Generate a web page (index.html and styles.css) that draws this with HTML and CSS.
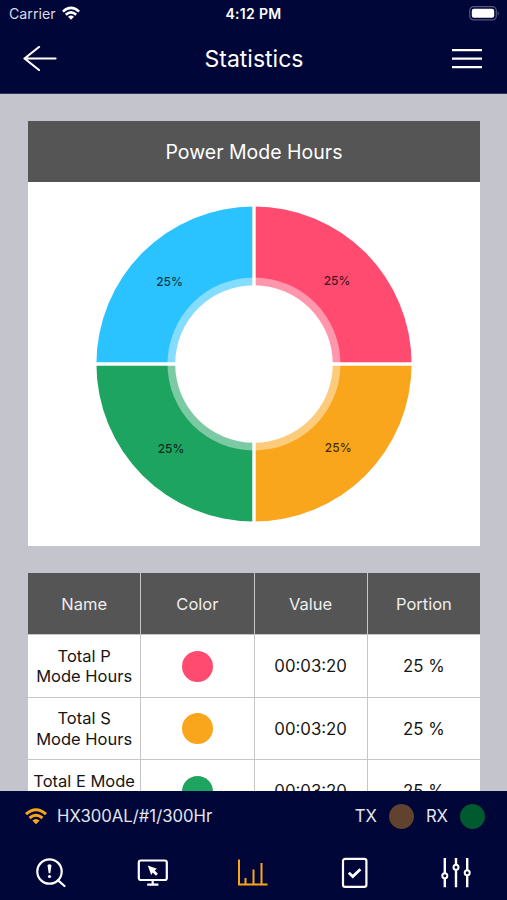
FILE: index.html
```html
<!DOCTYPE html>
<html lang="en">
<head>
<meta charset="utf-8">
<title>Statistics</title>
<link rel="stylesheet" href="styles.css">
</head>
<body>
<div class="app">
  <header class="top">
    <div class="status">
      <div class="carrier"><span>Carrier</span>
        <svg width="18" height="15" viewBox="0 0 18 15" fill="none" stroke="#fff" stroke-width="2.6"><path d="M.9 5.6Q9-1.8 17.1 5.6M3.8 8.7Q9 3.9 14.2 8.7"/><path d="M6 10.8Q9 8.4 12 10.8L9 13.8Z" fill="#fff" stroke="none"/></svg>
      </div>
      <div class="clock">4:12 PM</div>
      <svg class="battery" width="31" height="15" viewBox="0 0 31 15"><rect x=".7" y=".7" width="26.6" height="13.2" rx="4" fill="none" stroke="#55577f" stroke-width="1.2"/><rect x="2.8" y="2.8" width="22.4" height="9" rx="2.2" fill="#fff"/><path d="M28.7 5.2Q31 7.2 28.7 9.5Z" fill="#55577f"/></svg>
    </div>
    <div class="nav">
      <svg width="34" height="26" viewBox="0 0 34 26" fill="none" stroke="#fff" stroke-width="2.2" stroke-linecap="round" stroke-linejoin="round"><path d="M32.500 12.500H1.500M16 1 1.500 12.500 16 24"/></svg>
      <h1>Statistics</h1>
      <svg width="30" height="22" viewBox="0 0 30 22" stroke="#fff" stroke-width="2.3"><path d="M0 2.2H30M0 10.7H30M0 19.2H30"/></svg>
    </div>
  </header>
  <main>
    <section class="card">
      <h2>Power Mode Hours</h2>
      <svg class="chart" width="452" height="364" viewBox="28 182 452 364">
        <path d="M254 364V206.400A157.600 157.600 0 0 1 411.600 364Z" fill="#ff4b70"/>
        <path d="M254 364H411.600A157.600 157.600 0 0 1 254 521.600Z" fill="#faa61c"/>
        <path d="M254 364V521.600A157.600 157.600 0 0 1 96.400 364Z" fill="#1ea461"/>
        <path d="M254 364H96.400A157.600 157.600 0 0 1 254 206.400Z" fill="#2bc3ff"/>
        <circle cx="254" cy="364" r="86.500" fill="#fff" fill-opacity=".42"/>
        <circle cx="254" cy="364" r="78.800" fill="#fff"/>
        <path d="M254 205V523M95 364H413" stroke="#fff" stroke-width="3.400"/>
        <g class="slice"><text x="337" y="284.600">25%</text><text x="169.500" y="286">25%</text><text x="171" y="453">25%</text><text x="338.200" y="451.700">25%</text></g>
      </svg>
    </section>
    <section class="table">
      <div class="th">Name</div><div class="th">Color</div><div class="th">Value</div><div class="th">Portion</div>
      <div>Total P<br>Mode Hours</div><div><i class="dot pink"></i></div><div class="num">00:03:20</div><div class="num">25 %</div>
      <div>Total S<br>Mode Hours</div><div><i class="dot orange"></i></div><div class="num">00:03:20</div><div class="num">25 %</div>
      <div>Total E Mode<br>Hours</div><div><i class="dot green"></i></div><div class="num">00:03:20</div><div class="num">25 %</div>
    </section>
  </main>
  <footer>
    <div class="device">
      <svg width="22" height="17" viewBox="0 0 22 17" fill="none" stroke="#faa61c" stroke-width="3"><path d="M1 6.200Q11-2.600 21 6.200M4.600 10Q11 4.400 17.400 10"/><path d="M7.300 12.600Q11 9.400 14.700 12.600L11 16.200Z" fill="#faa61c" stroke="none"/></svg>
      <span class="model">HX300AL/#1/300Hr</span>
      <span class="tx">TX</span><i class="led brown"></i>
      <span class="rx">RX</span><i class="led darkgreen"></i>
    </div>
    <nav class="tabs">
      <svg width="34" height="34" viewBox="0 0 34 34" fill="none" stroke="#fff" stroke-width="2.200" stroke-linecap="round"><circle cx="15.500" cy="15.500" r="12.200"/><path d="M24.100 24.400 30.500 30"/><path d="M13.500 9.200Q15.500 7.200 17.500 9.200L16.300 17.300H14.700Z" fill="#fff" stroke="none"/><circle cx="15.500" cy="20.500" r="1.600" fill="#fff" stroke="none"/></svg>
      <svg width="34" height="34" viewBox="0 0 34 34" fill="none" stroke="#fff" stroke-width="2.200"><rect x="3.800" y="4.500" width="28" height="19.500" rx="2"/><path d="M17.700 24V28.500M12.200 28.600H23.400"/><path d="M12.800 9.600 21.900 12.700 19.700 14.500 22.900 17.800 20.900 19.700 17.800 16.400 16.200 19.100Z" fill="#fff" stroke="none"/></svg>
      <svg width="34" height="34" viewBox="0 0 34 34" fill="none" stroke="#faa61c" stroke-width="2"><path d="M3 3.500V28.400H31.500M9.500 28V22M17.500 28V13.500M25.500 28V7"/></svg>
      <svg width="34" height="34" viewBox="0 0 34 34" fill="none" stroke="#fff" stroke-width="2.200"><rect x="5" y="2.900" width="23.400" height="28" rx="2.200"/><path d="M10.800 16.700 14.800 20.500 22.400 13.300" stroke-width="2.800"/></svg>
      <svg width="34" height="34" viewBox="0 0 34 34" stroke="#fff" stroke-width="2.400" fill="#000638"><path d="M5.800 2V31.300M17 2V31.300M28.200 2V31.300"/><g stroke-width="2"><circle cx="5.800" cy="19.800" r="2.500"/><circle cx="17" cy="11.200" r="2.500"/><circle cx="28.200" cy="16.800" r="2.500"/></g></svg>
    </nav>
  </footer>
</div>
</body>
</html>
```
FILE: styles.css
```css
* { box-sizing: border-box; }
body { margin: 0; font-family: Inter, "Liberation Sans", sans-serif; }
svg { display: block; flex: none; }
h1, h2 { margin: 0; font-weight: 400; }
.app { width: 507px; height: 900px; display: flex; flex-direction: column; overflow: hidden; }
.top { height: 94px; flex: none; background: #000638; color: #fff; border-bottom: 1px solid #343660; }
.status { height: 27px; display: grid; grid-template-columns: 1fr auto 1fr; align-items: center; padding: 0 7px 0 9px; }
.carrier { display: flex; align-items: center; gap: 6px; font-size: 14.2px; color: #d9dae6; }
.clock { font-size: 14px; font-weight: 600; letter-spacing: .3px; margin-right: 2px; }
.battery { justify-self: end; }
.nav { height: 63px; display: grid; grid-template-columns: 1fr auto 1fr; align-items: center; padding: 0 25px 0 23px; }
.nav svg:last-child { justify-self: end; }
.nav h1 { font-size: 23px; margin-left: 3px; }
main { height: 697px; flex: none; overflow: hidden; background: #c4c4cd; padding: 27px 27px 0 28px; }
.card { background: #fff; height: 425px; }
.card h2 { height: 61px; line-height: 62px; text-align: center; background: #555; color: #fff; font-size: 19.5px; }
.slice { font-size: 12px; fill: rgba(0, 0, 0, .75); text-anchor: middle; font-weight: 500; }
.table { margin-top: 27px; display: grid; grid-template-columns: repeat(4, 1fr); grid-template-rows: 61px repeat(3, 61.5px); gap: 1px; background: #c6c6c8; font-size: 16.5px; line-height: 20.6px; color: #161616; }
.table > div { background: #fff; display: flex; align-items: center; justify-content: center; text-align: center; white-space: nowrap; padding-top: 1px; }
.table > .th { background: #555; color: #eee; }
.table > .num { font-size: 16.8px; padding-top: 2px; }
.dot { width: 31px; height: 31px; border-radius: 50%; }
.pink { background: #ff4b70; }
.orange { background: #faa61c; }
.green { background: #1ea461; }
footer { height: 109px; flex: none; background: #000638; color: #e4e5ef; }
.device { height: 50px; display: flex; align-items: center; padding: 0 22px 0 25px; font-size: 16.7px; }
.model { margin-left: 10px; }
.tx { margin-left: auto; }
.led { width: 25px; height: 25px; border-radius: 50%; margin-left: 12px; }
.rx { margin-left: 12px; }
.brown { background: #60422f; }
.darkgreen { background: #005a30; }
.tabs { display: grid; grid-template-columns: repeat(5, 1fr); justify-items: center; padding-top: 15px; }
```
